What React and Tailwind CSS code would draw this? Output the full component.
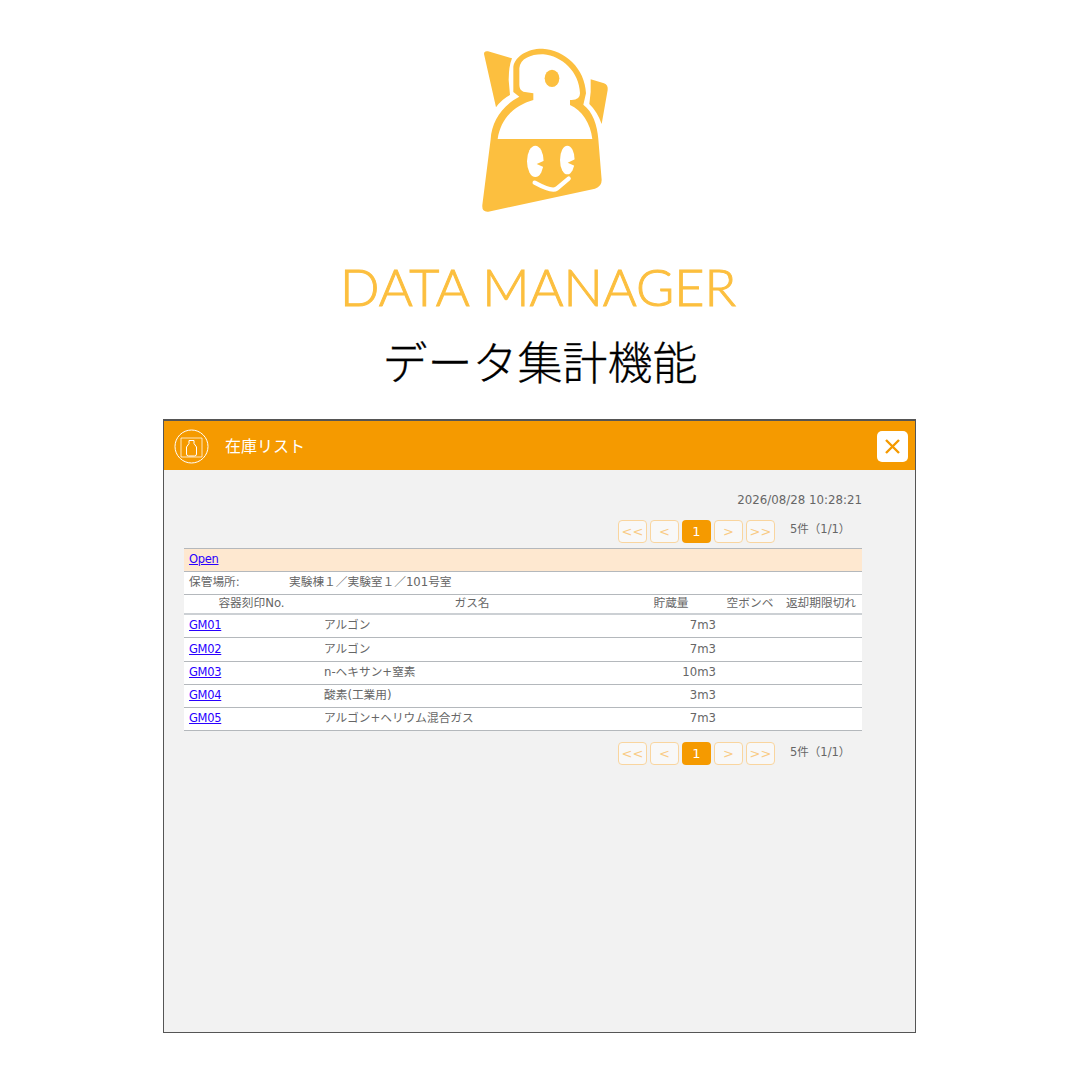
const uiFont = { fontFamily: '"DejaVu Sans", "Noto Sans CJK JP", sans-serif' }

const rows = [
  { no: 'GM01', gas: 'アルゴン', qty: '7m3' },
  { no: 'GM02', gas: 'アルゴン', qty: '7m3' },
  { no: 'GM03', gas: 'n-ヘキサン+窒素', qty: '10m3' },
  { no: 'GM04', gas: '酸素(工業用)', qty: '3m3' },
  { no: 'GM05', gas: 'アルゴン+ヘリウム混合ガス', qty: '7m3' },
]

const gridCols = 'grid grid-cols-[135px_306px_95px_60px_82px]'

function Logo() {
  return (
    <svg width="170" height="200" viewBox="0 0 510 600">
      <path d="M72 72 Q72 62 84 64 L156 85 Q146 110 146 150 L150 195 Q125 208 108 232 Z" fill="#fcbf3f" />
      <path d="M392 148 L432 160 Q445 165 443 180 L425 282 Q412 245 388 222 Q394 185 392 148 Z" fill="#fcbf3f" />
      <path
        d="M92 328 C95 275 125 228 178 200 L160 186 L160 110 C165 78 205 55 248 56 C315 60 375 115 378 190 L370 224 C398 245 412 285 415 328 L425 450 Q425 470 405 476 L85 545 Q65 547 67 525 Z"
        fill="#fcbf3f"
      />
      <path
        d="M113 327 C122 265 165 225 220 210 L220 190 L190 185 Q178 180 178 165 L178 115 C180 85 215 72 250 73 C305 78 358 125 360 190 Q360 212 330 210 L330 225 C365 240 392 280 397 327 Z"
        fill="#fff"
      />
      <ellipse cx="276" cy="145" rx="22" ry="26" fill="#fcbf3f" />
      <ellipse cx="226" cy="394" rx="25" ry="47" fill="#fff" />
      <ellipse cx="322" cy="390" rx="22" ry="43" fill="#fff" />
      <path d="M252 392 L230 402 L252 412 Z" fill="#fcbf3f" />
      <path d="M345 388 L323 398 L345 408 Z" fill="#fcbf3f" />
      <path d="M224 458 Q275 486 290 476 L326 446" fill="none" stroke="#fff" strokeWidth="13" strokeLinecap="round" />
    </svg>
  )
}

function Pager({ className }) {
  const btn = 'w-[29px] h-[23px] rounded-[4px] border border-[#f9d59f] bg-[#f8f8f8] text-[#f9cb85] flex items-center justify-center text-[13px]'
  return (
    <div className={`w-[678px] flex items-center justify-end pr-[17px] ${className}`}>
      <div className="flex gap-[3px]">
        <div className={btn}>&lt;&lt;</div>
        <div className={btn}>&lt;</div>
        <div className="w-[29px] h-[23px] rounded-[4px] bg-[#f59a00] text-white flex items-center justify-center text-[13px]">1</div>
        <div className={btn}>&gt;</div>
        <div className={btn}>&gt;&gt;</div>
      </div>
      <div className="ml-[15px] w-[55px] mb-[3px] text-[11.5px] whitespace-nowrap text-[#666]">5件（1/1）</div>
    </div>
  )
}

export default function App() {
  return (
    <div className="w-[1080px] h-[1080px] bg-white flex flex-col items-center overflow-hidden">
      <div className="mt-[30px] h-[200px] ml-[10px]">
        <Logo />
      </div>
      <div
        className="mt-[23px] mr-[4px] h-[66px] leading-[66px] text-[52px] font-light text-[#fcbf3f] whitespace-nowrap [-webkit-text-stroke:1px_#fcbf3f]"
        style={{ fontFamily: 'Lato, sans-serif' }}
      >
        DATA MANAGER
      </div>
      <div
        className="mt-[12px] h-[60px] leading-[60px] text-[45px] font-light text-black whitespace-nowrap [-webkit-text-stroke:0.3px_#000]"
        style={{ fontFamily: '"Noto Sans CJK JP", sans-serif' }}
      >
        データ集計機能
      </div>

      <div
        className="mt-[28px] self-start ml-[163px] w-[753px] h-[614px] border border-[#555] border-t-2 bg-[#f2f2f2] text-[11.7px] text-[#666]"
        style={uiFont}
      >
        {/* Header */}
        <div className="h-[49px] bg-[#f59a00] flex items-center pl-[10px] pr-[7px]">
          <svg width="36" height="36" viewBox="0 0 36 36" fill="none" stroke="#fff" strokeWidth="1">
            <circle cx="17.5" cy="18.5" r="16.5" />
            <path d="M7 29 V10 H28 V29 Z" strokeOpacity="0.75" />
            <path d="M15 12.5 H20 V15.5 L22.5 19 V26 Q22.5 28 20.5 28 H14.5 Q12.5 28 12.5 26 V19 L15 15.5 Z" />
          </svg>
          <div className="ml-[15px] pt-[2px] text-[16px] text-white">在庫リスト</div>
          <div className="ml-auto mt-[2px] w-[31px] h-[31px] rounded-[5px] bg-white flex items-center justify-center">
            <svg width="19" height="19" viewBox="0 0 19 19" stroke="#f59a00" strokeWidth="2.4">
              <path d="M3 3 L16 16 M16 3 L3 16" />
            </svg>
          </div>
        </div>

        {/* Body */}
        <div className="pl-[20px] pt-[22px]">
          <div className="w-[678px] h-[17px] leading-[17px] text-right text-[11.8px]">2026/08/28 10:28:21</div>
          <Pager className="mt-[11px]" />

          <div className="w-[678px] mt-[5px]">
            <div className="h-[24px] flex items-center px-[5px] bg-[#fee8d0] border-t border-b border-[#b4b8bc]">
              <a className="text-[11.5px] tracking-[-0.3px] text-[#2a00ff] underline">Open</a>
            </div>
            <div className="h-[23px] flex items-center px-[5px] bg-white border-b border-[#b4b8bc]">
              <div className="w-[100px]">保管場所:</div>
              <div>実験棟１／実験室１／101号室</div>
            </div>
            <div className={`${gridCols} h-[20px] items-center bg-white border-b-2 border-[#ccd0d4] whitespace-nowrap`}>
              <div className="text-center">容器刻印No.</div>
              <div className="text-center">ガス名</div>
              <div className="text-center pr-[3px]">貯蔵量</div>
              <div className="text-center">空ボンベ</div>
              <div className="text-center">返却期限切れ</div>
            </div>
            {rows.map((r) => (
              <div key={r.no} className={`${gridCols} h-[23.25px] items-center bg-white border-b border-[#b4b8bc]`}>
                <div className="pl-[5px]">
                  <a className="text-[11.5px] tracking-[-0.3px] text-[#2a00ff] underline">{r.no}</a>
                </div>
                <div className="pl-[5px]">{r.gas}</div>
                <div className="text-right pr-[4px]">{r.qty}</div>
                <div />
                <div />
              </div>
            ))}
          </div>

          <Pager className="mt-[11px]" />
        </div>
      </div>
    </div>
  )
}
